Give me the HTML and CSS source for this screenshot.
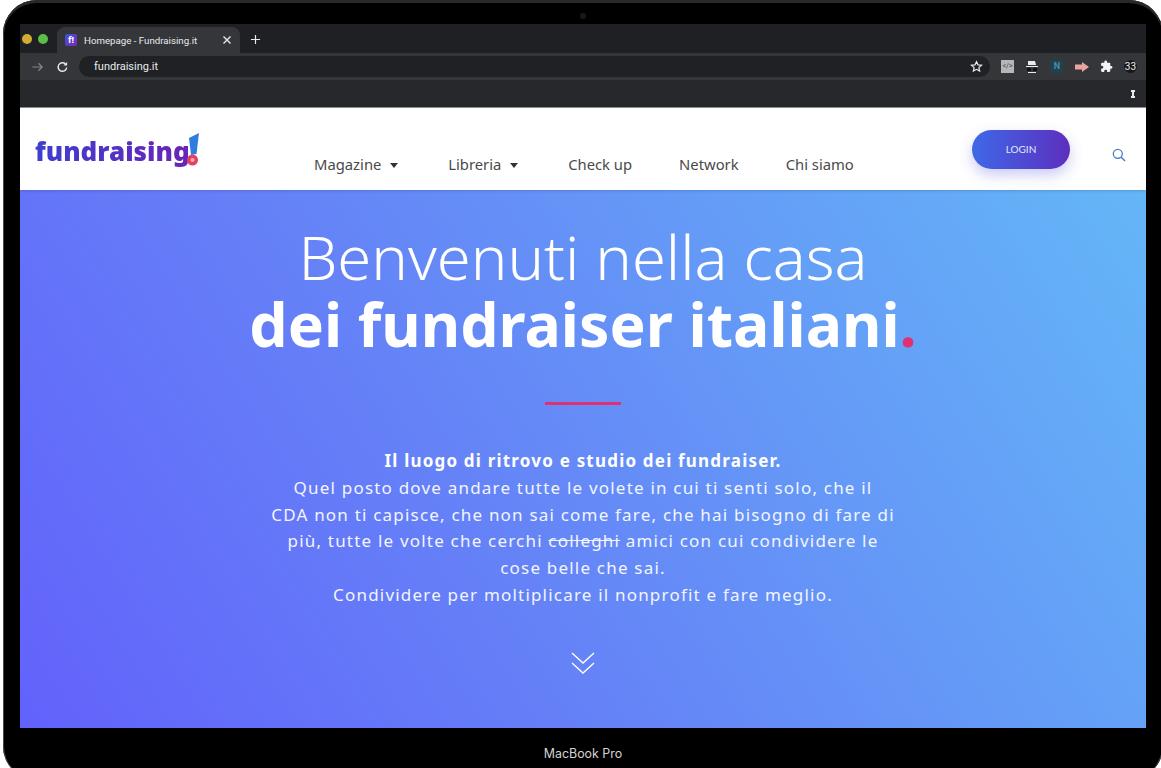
FILE: index.html
```html
<!DOCTYPE html>
<html lang="en">
<head>
  <meta charset="UTF-8">
  <title>Homepage - Fundraising.it</title>
  <link rel="stylesheet" href="styles.css">
</head>
<body>

<div class="laptop">
  <div class="camera"></div>

  <div class="screen">

    <!-- browser tabs -->
    <div class="tabstrip">
      <div class="traffic">
        <span class="dot yellow"></span>
        <span class="dot green"></span>
      </div>
      <div class="tab">
        <span class="favicon">f!</span>
        <span class="tab-title">Homepage - Fundraising.it</span>
        <svg class="tab-close" width="10" height="10" viewBox="0 0 10 10"><path d="M1.500 1.500l7 7M8.500 1.500l-7 7" stroke="#e8eaed" stroke-width="1.400"/></svg>
      </div>
      <svg class="tab-new" width="11" height="11" viewBox="0 0 12 12"><path d="M6 1v10M1 6h10" stroke="#e8eaed" stroke-width="1.300"/></svg>
    </div>

    <!-- address bar -->
    <div class="toolbar">
      <svg class="tool-icon" width="13" height="14" viewBox="0 0 14 14"><path d="M1.500 7h10.500M8 3l4 4-4 4" fill="none" stroke="#80868b" stroke-width="1.300"/></svg>
      <svg class="tool-icon" width="13" height="14" viewBox="0 0 14 14"><path d="M11.500 7.500a4.600 4.600 0 1 1-1.300-3.700" fill="none" stroke="#e8eaed" stroke-width="1.500"/><path d="M12 1.500v4h-4z" fill="#e8eaed"/></svg>
      <div class="omnibox">
        <span class="url">fundraising.it</span>
        <svg width="13" height="13" viewBox="0 0 24 24"><path d="M12 3l2.800 6 6.500.7-4.900 4.400 1.400 6.400L12 17.200 6.200 20.500l1.400-6.400-4.900-4.400 6.500-.7z" fill="none" stroke="#e8eaed" stroke-width="2.200"/></svg>
      </div>
      <div class="extensions">
        <span class="ext ext-code">&lt;/&gt;</span>
        <svg width="14" height="14" viewBox="0 0 14 14"><path d="M3 1h7l1 4H3z" fill="#e8eaed"/><path d="M1 6h12v1H1z" fill="#e8eaed"/><rect x="2" y="8" width="4" height="3" fill="#111"/><rect x="8" y="8" width="4" height="3" fill="#111"/><path d="M3 12h8v1H3z" fill="#e8eaed"/></svg>
        <span class="ext ext-n">N</span>
        <svg width="14" height="10" viewBox="0 0 14 10"><path d="M0 2.500h7V0l7 5-7 5V7.500H0z" fill="#eba3a0"/></svg>
        <svg width="13" height="13" viewBox="0 0 24 24"><path d="M20.500 11H19V7a2 2 0 0 0-2-2h-4V3.500a2.500 2.500 0 0 0-5 0V5H4a2 2 0 0 0-2 2v3.800h1.500a2.700 2.700 0 0 1 0 5.400H2V20a2 2 0 0 0 2 2h3.800v-1.500a2.700 2.700 0 0 1 5.400 0V22H17a2 2 0 0 0 2-2v-4h1.500a2.500 2.500 0 0 0 0-5z" fill="#f1f3f4"/></svg>
        <span class="ext ext-num">33</span>
      </div>
    </div>

    <!-- bookmarks bar -->
    <div class="bookmarks">
      <svg width="4" height="8" viewBox="0 0 4 8"><path d="M0 0h4v2H3v4h1v2H0V6h1V2H0z" fill="#e8eaed"/></svg>
    </div>

    <!-- site header -->
    <header class="site-header">
      <a class="logo" href="#">
        <span class="logo-word">fundraising</span>
        <svg class="logo-mark" width="14" height="36" viewBox="0 0 14 36">
          <path d="M3 6l10-5-2.500 21-5.500 1z" fill="#2f7de1"/>
          <circle cx="6.500" cy="28" r="5.500" fill="#e5405e"/>
          <circle cx="6.500" cy="28" r="2" fill="#f7b4bd"/>
        </svg>
      </a>
      <nav class="main-nav">
        <a href="#">Magazine <span class="caret"></span></a>
        <a href="#">Libreria <span class="caret"></span></a>
        <a href="#">Check up</a>
        <a href="#">Network</a>
        <a href="#">Chi siamo</a>
      </nav>
      <a class="login" href="#">LOGIN</a>
      <svg class="search" width="14" height="14" viewBox="0 0 14 14"><circle cx="5.800" cy="5.800" r="4.500" fill="none" stroke="#4a7fc4" stroke-width="1.300"/><path d="M9 9l4 4" stroke="#4a7fc4" stroke-width="1.500"/></svg>
    </header>

    <!-- hero -->
    <section class="hero">
      <h1 class="hero-title">
        <span class="light">Benvenuti nella casa</span>
        <strong>dei fundraiser italiani<span class="pink">.</span></strong>
      </h1>
      <div class="rule"></div>
      <div class="hero-text">
        <p><strong>Il luogo di ritrovo e studio dei fundraiser.</strong></p>
        <p>Quel posto dove andare tutte le volete in cui ti senti solo, che il<br>CDA non ti capisce, che non sai come fare, che hai bisogno di fare di<br>più, tutte le volte che cerchi <s>colleghi</s> amici con cui condividere le<br>cose belle che sai.</p>
        <p>Condividere per moltiplicare il nonprofit e fare meglio.</p>
      </div>
      <svg class="chevrons" width="26" height="24" viewBox="0 0 26 24"><path d="M2 2l11 10L24 2M2 12l11 10 11-10" fill="none" stroke="#fff" stroke-width="1.400"/></svg>
    </section>
  </div>

  <div class="model">MacBook Pro</div>
</div>

</body>
</html>
```

FILE: styles.css
```css
* {
  margin: 0;
  padding: 0;
  box-sizing: border-box;
}

html,
body {
  height: 768px;
  overflow: hidden;
}

body {
  background-color: white;
  font-family: "Noto Sans", sans-serif;
}

a {
  text-decoration: none;
  color: inherit;
}

.laptop {
  position: relative;
  width: 1160px;
  height: 780px;
  margin-left: 3px;
  padding: 24px 0 0 17px;
  background-color: black;
  border-radius: 34px;
  box-shadow: inset 0 3px 0 #29292b, inset 1px 0 0 #4a4a4c, inset -1px 0 0 #4a4a4c;
}

.camera {
  position: absolute;
  top: 13px;
  left: 577px;
  width: 6px;
  height: 6px;
  border-radius: 50%;
  background-color: #16181c;
}

.screen {
  width: 1126px;
  height: 704px;
  display: flex;
  flex-direction: column;
}

/* browser chrome */
.tabstrip {
  height: 29px;
  display: flex;
  align-items: flex-end;
  background-color: #1f2023;
}

.traffic {
  display: flex;
  gap: 6px;
  align-self: center;
  width: 37px;
  padding-left: 2px;
}

.dot {
  width: 10px;
  height: 10px;
  border-radius: 50%;
}

.yellow {
  background-color: #d3ac33;
}

.green {
  background-color: #5cbd4a;
}

.tab {
  width: 183px;
  height: 26px;
  display: flex;
  align-items: center;
  padding: 0 8px 0 8px;
  background-color: #35363a;
  border-radius: 8px 8px 0 0;
}

.favicon {
  width: 12px;
  height: 12px;
  border-radius: 2px;
  margin-right: 7px;
  background: linear-gradient(135deg, #3c52d9, #7a2bb5);
  color: white;
  font-size: 9px;
  line-height: 12px;
  font-weight: bold;
  text-align: center;
}

.tab-title {
  flex: 1;
  font-family: "Roboto", sans-serif;
  font-size: 9.700px;
  color: #e8eaed;
  white-space: nowrap;
}

.tab-new {
  margin: 0 0 8px 10px;
}

.toolbar {
  height: 27px;
  display: flex;
  align-items: center;
  padding: 0 9px 0 11px;
  background-color: #35363a;
}

.tool-icon {
  margin-right: 12px;
}

.omnibox {
  flex: none;
  width: 911px;
  height: 21px;
  display: flex;
  align-items: center;
  justify-content: space-between;
  margin-left: -2px;
  padding: 0 7px 0 15px;
  border-radius: 11px;
  background-color: #202124;
}

.url {
  font-family: "Roboto", sans-serif;
  font-size: 11px;
  color: #e8eaed;
}

.extensions {
  flex: 1;
  display: flex;
  align-items: center;
  justify-content: space-between;
  margin-left: 11px;
}

.ext {
  width: 13px;
  height: 13px;
  font-family: "Roboto", sans-serif;
  font-size: 7px;
  line-height: 13px;
  text-align: center;
}

.ext-code {
  background-color: #b4b6b8;
  color: #444;
}

.ext-n {
  background-color: #22414d;
  color: #3f8fb0;
  font-size: 9px;
  font-weight: bold;
}

.ext-num {
  border-radius: 50%;
  background-color: #16171a;
  color: #e8eaed;
  font-size: 10px;
}

.bookmarks {
  height: 27px;
  display: flex;
  align-items: center;
  justify-content: flex-end;
  padding-right: 11px;
  background-color: #26282c;
}

/* site header */
.site-header {
  height: 83px;
  display: flex;
  background-color: white;
  border-top: 1px solid #8a8c8e;
  box-shadow: 0 1px 3px rgba(0, 0, 0, 0.15);
  position: relative;
}

.logo {
  width: 294px;
  display: flex;
  align-items: flex-start;
  padding: 24px 0 0 15px;
}

.logo-word {
  font-family: "Noto Sans", sans-serif;
  font-size: 26px;
  line-height: 38px;
  font-weight: 900;
  background: linear-gradient(90deg, #3d3fd0, #6a24b8);
  -webkit-background-clip: text;
  background-clip: text;
  color: transparent;
}

.logo-mark {
  flex: none;
  margin-left: -4px;
}

.main-nav {
  flex: 1;
  display: flex;
  gap: 47px;
  padding-top: 44px;
  font-size: 14.800px;
  line-height: 24px;
  color: #4a4a4a;
}

.caret {
  display: inline-block;
  width: 0;
  height: 0;
  margin: 0 3px 0 5px;
  vertical-align: 2px;
  border-left: 4px solid transparent;
  border-right: 4px solid transparent;
  border-top: 5px solid #333;
}

.login {
  width: 98px;
  height: 39px;
  margin: 22px 42px 0 0;
  border-radius: 20px;
  background: linear-gradient(90deg, #3f68e8, #5c2fbe);
  box-shadow: 0 6px 14px rgba(80, 80, 230, 0.3);
  color: #e3e8fb;
  font-family: "Lato", sans-serif;
  font-size: 10px;
  line-height: 39px;
  text-align: center;
}

.search {
  margin: 40px 20px 0 0;
}

/* hero */
.hero {
  flex: 1;
  display: flex;
  flex-direction: column;
  align-items: center;
  padding-top: 32px;
  background: linear-gradient(58deg, #6262fb 0%, #6582f7 40%, #64b6f7 100%);
  color: white;
  text-align: center;
}

.hero-title {
  font-size: 61.500px;
  line-height: 68px;
  font-weight: normal;
}

.hero-title span,
.hero-title strong {
  display: block;
}

.hero-title .light {
  font-weight: 300;
}

.hero-title strong {
  font-size: 60.700px;
  font-weight: 700;
}

.hero-title .pink {
  display: inline;
  color: #e0306f;
}

.rule {
  width: 76px;
  height: 3px;
  margin-top: 44px;
  background-color: #e0306f;
}

.hero-text {
  width: 660px;
  margin-top: 43px;
  font-size: 17px;
  line-height: 26.800px;
  letter-spacing: 1.200px;
  color: #f2f5ff;
}

.hero-text strong {
  color: white;
}

.chevrons {
  margin-top: 42px;
}

.model {
  height: 40px;
  width: 1126px;
  padding-top: 18px;
  text-align: center;
  font-family: "Inter", sans-serif;
  font-size: 12.400px;
  color: #d4d4d4;
}
```
